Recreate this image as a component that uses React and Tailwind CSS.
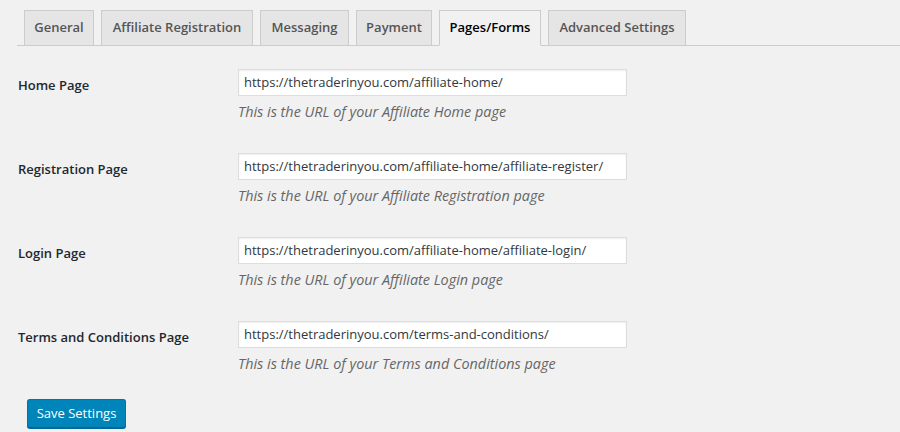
import React from "react";

const tabs = [
  { label: "General", w: "w-[70px]" },
  { label: "Affiliate Registration", w: "w-[152px]" },
  { label: "Messaging", w: "w-[89px]" },
  { label: "Payment", w: "w-[76px]" },
  { label: "Pages/Forms", w: "w-[102px]", active: true },
  { label: "Advanced Settings", w: "w-[138px]" },
];

const rows = [
  {
    label: "Home Page",
    value: "https://thetraderinyou.com/affiliate-home/",
    desc: "This is the URL of your Affiliate Home page",
  },
  {
    label: "Registration Page",
    value: "https://thetraderinyou.com/affiliate-home/affiliate-register/",
    desc: "This is the URL of your Affiliate Registration page",
  },
  {
    label: "Login Page",
    value: "https://thetraderinyou.com/affiliate-home/affiliate-login/",
    desc: "This is the URL of your Affiliate Login page",
  },
  {
    label: "Terms and Conditions Page",
    value: "https://thetraderinyou.com/terms-and-conditions/",
    desc: "This is the URL of your Terms and Conditions page",
  },
];

export default function App() {
  return (
    <div
      className="w-[900px] h-[432px] bg-[#f1f1f1] overflow-hidden"
      style={{ fontFamily: '"Open Sans", "Noto Sans", sans-serif' }}
    >
      <div className="pt-[10px] ml-[17px] flex items-end border-b border-[#ccc]">
        {tabs.map((t) =>
          t.active ? (
            <div
              key={t.label}
              className={`${t.w} ml-[7px] mb-[-1px] h-[36px] flex items-center justify-center whitespace-nowrap border border-[#ccc] border-b-[#f1f1f1] bg-[#f1f1f1] text-black text-[13px] font-semibold`}
            >
              {t.label}
            </div>
          ) : (
            <div
              key={t.label}
              className={`${t.w} ml-[7px] h-[35px] flex items-center justify-center whitespace-nowrap border border-b-0 border-[#ccc] bg-[#e5e5e5] text-[#555] text-[13px] font-semibold`}
            >
              {t.label}
            </div>
          )
        )}
      </div>

      <div className="mt-[8px]">
        {rows.map((r) => (
          <div key={r.label} className="flex h-[84px]">
            <div className="w-[238px] pl-[18px] pt-[22px] text-[13px] leading-[18px] font-semibold text-[#23282d]">
              {r.label}
            </div>
            <div className="pt-[15px]">
              <div className="w-[389px] h-[27px] bg-white border border-[#ddd] shadow-[inset_0_1px_2px_rgba(0,0,0,0.07)] pl-[5px] flex items-center text-[13px] text-[#32373c]">
                {r.value}
              </div>
              <div className="mt-[6px] leading-[20px] text-[14.4px] italic text-[#666]">
                {r.desc}
              </div>
            </div>
          </div>
        ))}
      </div>

      <div className="mt-[9px] ml-[27px]">
        <button className="h-[29px] w-[99px] rounded-[3px] bg-[#0085ba] border border-[#0073aa] border-b-[#006799] shadow-[0_1px_0_#006799] text-white text-[13px] flex items-center justify-center">
          Save Settings
        </button>
      </div>
    </div>
  );
}
